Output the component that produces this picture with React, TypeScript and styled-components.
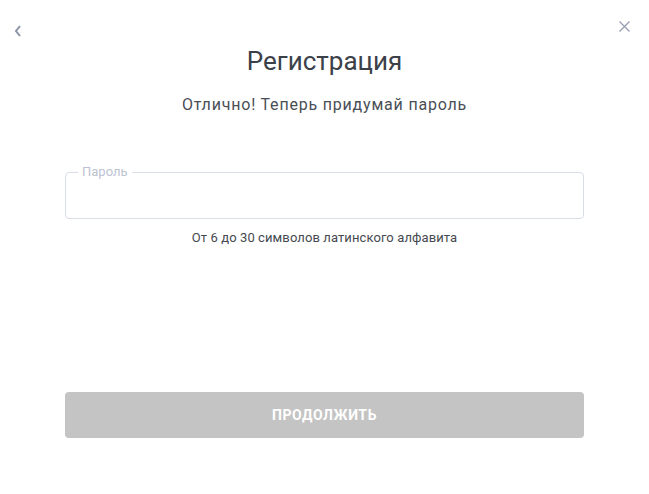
import React from 'react';
import styled, { createGlobalStyle } from 'styled-components';

const GlobalStyle = createGlobalStyle`
    html, body {
        margin: 0;
        padding: 0;
        background: #ffffff;
        font-family: Roboto, "Noto Sans", Arial, sans-serif;
    }
`;

const App = () => {
    return (
        <Page>
            <GlobalStyle />
            <TopBar>
                <IconButton aria-label='back'>
                    <svg width='8' height='12' viewBox='0 0 8 12'>
                        <path d='M6 1 L2 6 L6 11' fill='none' stroke='#8a92a8' strokeWidth='2' />
                    </svg>
                </IconButton>
                <IconButton aria-label='close'>
                    <svg width='11' height='11' viewBox='0 0 11 11'>
                        <path d='M0.5 0.5 L10.5 10.5 M10.5 0.5 L0.5 10.5' fill='none' stroke='#9aa0b6' strokeWidth='1.4' />
                    </svg>
                </IconButton>
            </TopBar>
            <Title>Регистрация</Title>
            <Subtitle>Отлично! Теперь придумай пароль</Subtitle>
            <Form>
                <Field>
                    <Legend>Пароль</Legend>
                    <Input type='password' />
                </Field>
                <Hint>От 6 до 30 символов латинского алфавита</Hint>
                <Submit type='submit' disabled>Продолжить</Submit>
            </Form>
        </Page>
    );
};

export default App;

const Page = styled.div`
    width: 649px;
    height: 494px;
    box-sizing: border-box;
    display: flex;
    flex-direction: column;
    align-items: center;
    padding: 0 65px;
`;

const TopBar = styled.div`
    width: 649px;
    box-sizing: border-box;
    display: flex;
    justify-content: space-between;
    align-items: flex-start;
    padding: 21px 19px 0 14px;
    height: 40px;
`;

const IconButton = styled.button`
    border: none;
    background: none;
    padding: 0;
    display: flex;
    cursor: pointer;
    &:first-child {
        margin-top: 4px;
    }
`;

const Title = styled.h1`
    margin: 5px 0 0;
    font-size: 26px;
    font-weight: 400;
    line-height: 32px;
    color: #3b4049;
`;

const Subtitle = styled.p`
    margin: 18px 0 0;
    font-size: 16px;
    line-height: 20px;
    letter-spacing: 0.8px;
    color: #4a4e56;
`;

const Form = styled.div`
    width: 519px;
    display: flex;
    flex-direction: column;
    align-items: center;
    margin-top: 50px;
`;

const Field = styled.fieldset`
    width: 100%;
    box-sizing: border-box;
    margin: 0;
    padding: 0 12px;
    height: 54px;
    border: 1px solid #d8dde7;
    border-radius: 4px;
`;

const Legend = styled.legend`
    padding: 0 4px;
    font-size: 13px;
    line-height: 14px;
    color: #bcc3d2;
`;

const Input = styled.input`
    width: 100%;
    border: none;
    outline: none;
    background: transparent;
    font-family: inherit;
    font-size: 15px;
    height: 30px;
`;

const Hint = styled.p`
    margin: 11px 0 0;
    font-size: 13px;
    line-height: 16px;
    letter-spacing: 0.1px;
    color: #45494f;
`;

const Submit = styled.button`
    width: 100%;
    height: 46px;
    margin-top: 146px;
    border: none;
    border-radius: 4px;
    background: #c4c4c4;
    color: #ffffff;
    font-family: inherit;
    font-size: 14px;
    font-weight: 700;
    text-transform: uppercase;
    letter-spacing: 0.6px;
`;
